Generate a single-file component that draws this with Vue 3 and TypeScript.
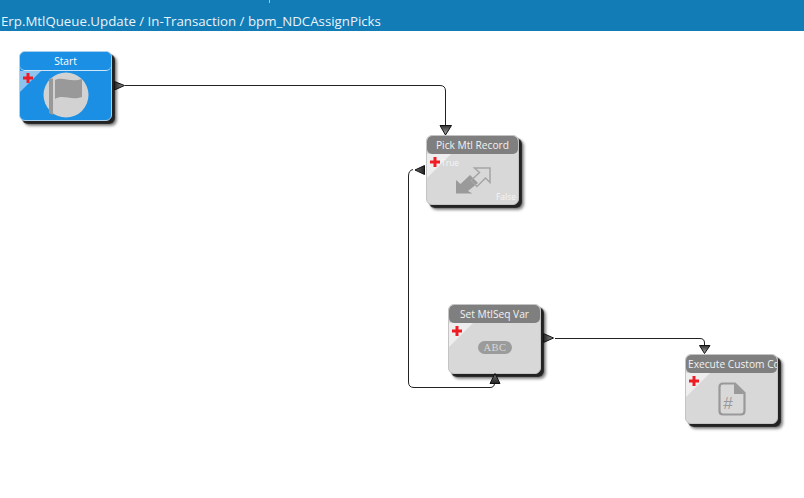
<script setup lang="ts">
interface FlowNode {
  id: string
  title: string
  x: number
  y: number
  kind: 'start' | 'cond' | 'set' | 'code'
}
const nodes: FlowNode[] = [
  { id: 'start', title: 'Start', x: 19, y: 51, kind: 'start' },
  { id: 'pick', title: 'Pick Mtl Record', x: 426, y: 135, kind: 'cond' },
  { id: 'set', title: 'Set MtlSeq Var', x: 448, y: 304, kind: 'set' },
  { id: 'code', title: 'Execute Custom Code', x: 685, y: 354, kind: 'code' },
]
</script>

<template>
  <div class="page">
    <header class="bar">
      <span class="tick"></span>
      <span class="crumb">Erp.MtlQueue.Update / In-Transaction / bpm_NDCAssignPicks</span>
    </header>
    <main class="canvas">
      <section
        v-for="n in nodes"
        :key="n.id"
        class="node"
        :class="'node-' + n.kind"
        :style="{ left: n.x + 'px', top: n.y + 'px' }"
      >
        <div class="title">{{ n.title }}</div>
        <div class="body">
          <span class="corner"></span>
          <svg class="plus" width="10" height="10" viewBox="0 0 10 10">
            <path d="M3.5 0 H6.5 V3.5 H10 V6.5 H6.5 V10 H3.5 V6.5 H0 V3.5 H3.5 Z" fill="#ee1c25" />
          </svg>
          <template v-if="n.kind === 'start'">
            <svg class="icon icon-start" width="46" height="46" viewBox="0 0 46 46">
              <circle cx="23" cy="23" r="22.5" fill="#d2d2d2" />
              <path d="M6 6.5 H10 V43 L6 41 Z" fill="#999" />
              <path d="M12 8 C19 4 27 11 39 7 V25 C28 29 20 22 12 27 Z" fill="#999" />
            </svg>
          </template>
          <template v-else-if="n.kind === 'cond'">
            <span class="lbl lbl-true">True</span>
            <span class="lbl lbl-false">False</span>
            <svg class="icon icon-cond" width="36" height="28" viewBox="0 0 36 28">
              <path d="M1 26.5 V13 L5.5 17 L15 8 L23 16 L13 24 L17.5 26.5 Z" fill="#9a9a9a" />
              <path d="M19.5 1 H35 V15.5 L30.5 11 L22 19.5 L16 13.5 L24.5 5.5 Z" fill="none" stroke="#a5a5a5" stroke-width="1.5" />
            </svg>
          </template>
          <template v-else-if="n.kind === 'set'">
            <span class="abc">ABC</span>
          </template>
          <template v-else>
            <svg class="icon icon-code" width="28" height="34" viewBox="0 0 28 34">
              <path d="M5 1.5 H17 L26.5 11 V29 Q26.5 32.5 23 32.5 H5 Q1.5 32.5 1.5 29 V5 Q1.5 1.5 5 1.5 Z" fill="none" stroke="#999" stroke-width="2.2" />
              <path d="M16 1.5 L26.5 12 H16 Z" fill="#999" />
              <text x="10" y="27" text-anchor="middle" class="hash">#</text>
            </svg>
          </template>
        </div>
      </section>

      <svg class="wires" width="804" height="467" viewBox="0 31 804 467">
        <defs>
          <linearGradient id="gr" x1="0" y1="0" x2="1" y2="0">
            <stop offset="0" stop-color="#222" />
            <stop offset="1" stop-color="#999" />
          </linearGradient>
          <linearGradient id="gd" x1="0" y1="0" x2="0" y2="1">
            <stop offset="0" stop-color="#333" />
            <stop offset="1" stop-color="#aaa" />
          </linearGradient>
          <linearGradient id="gu" x1="0" y1="1" x2="0" y2="0">
            <stop offset="0" stop-color="#222" />
            <stop offset="1" stop-color="#777" />
          </linearGradient>
          <linearGradient id="gl" x1="1" y1="0" x2="0" y2="0">
            <stop offset="0" stop-color="#222" />
            <stop offset="1" stop-color="#666" />
          </linearGradient>
        </defs>
        <g fill="none" stroke="#222" stroke-width="1">
          <path d="M125 85.5 H440 Q445.5 85.5 445.5 91 V126" />
          <path d="M555 338.5 H700 Q704.5 338.5 704.5 343 V346" />
          <path d="M413 169.5 Q408.5 170.5 408.5 176 V382 Q408.5 387.5 414 387.5 H490 Q494.5 387.5 494.5 383 V381" />
        </g>
        <g stroke="#111" stroke-width="1">
          <path d="M114.5 81.5 L124.5 85.5 L114.5 90 Z" fill="url(#gr)" />
          <path d="M440 125.5 H451.5 L445.5 135 Z" fill="url(#gd)" />
          <path d="M543.5 333.5 L553.5 338 L543.5 342.5 Z" fill="url(#gr)" />
          <path d="M699.5 345.5 H710 L704.5 353.5 Z" fill="url(#gd)" />
          <path d="M424.5 165.5 V174.5 L415 170 Z" fill="url(#gl)" />
          <path d="M490 383.5 L495 373.5 L500 383.5 Z" fill="url(#gu)" />
        </g>
      </svg>
    </main>
  </div>
</template>

<style scoped>
.page {
  width: 804px;
  height: 498px;
  background: #fff;
  overflow: hidden;
  font-family: "Open Sans", "Noto Sans", sans-serif;
}
.bar {
  position: relative;
  height: 31px;
  background: #127cb7;
  display: flex;
  align-items: flex-end;
  box-sizing: border-box;
  padding: 0 0 0 1px;
}
.tick {
  position: absolute;
  left: 269px;
  top: 0;
  width: 1px;
  height: 3px;
  background: #9cc6de;
}
.crumb {
  color: #e9f3f9;
  font-size: 13.27px;
  line-height: 20px;
  white-space: nowrap;
}
.canvas {
  position: relative;
  height: 467px;
}
.wires {
  position: absolute;
  left: 0;
  top: 0;
  pointer-events: none;
}
.node {
  position: absolute;
  margin-top: -31px;
  width: 93px;
  height: 70px;
  border-radius: 6px;
  box-shadow: 3px 3px 1px #222, 5px 5px 3px #888;
  overflow: hidden;
  display: flex;
  flex-direction: column;
  background: #d8d8d8;
  border: 1px solid #c4c4c4;
  box-sizing: border-box;
}
.title {
  height: 18px;
  flex: none;
  background: #7f7f7f;
  color: #f2f2f2;
  font-size: 10.2px;
  line-height: 18px;
  text-align: center;
  white-space: nowrap;
  overflow: hidden;
  border-radius: 5px;
}
.node-code .title {
  text-align: left;
  padding-left: 2px;
}
.body {
  position: relative;
  flex: 1;
}
.corner {
  position: absolute;
  left: 0;
  top: 0;
  width: 0;
  height: 0;
  border-top: 24px solid #eeeeee;
  border-right: 24px solid transparent;
}
.plus {
  position: absolute;
  left: 3px;
  top: 3px;
}
.icon {
  position: absolute;
}
.node-start {
  background: #1a8fe3;
  border-color: #a9d0ee;
}
.node-start .title {
  background: #1a8fe3;
  border-bottom: 1px solid #cfe5f6;
  box-sizing: content-box;
  height: 18px;
  line-height: 19px;
  color: #fff;
}
.node-start .corner {
  border-top-width: 21px;
  border-right-width: 21px;
  border-top-color: #8cc4ef;
}
.node-start .plus {
  top: 2px;
}
.icon-start {
  left: 23px;
  top: 1px;
}
.icon-cond {
  left: 28px;
  top: 13px;
}
.icon-code {
  left: 32px;
  top: 9px;
}
.hash {
  font-family: "Liberation Sans", sans-serif;
  font-size: 17px;
  fill: #999;
}
.lbl {
  position: absolute;
  color: #f5f5f5;
  font-size: 8.5px;
  line-height: 11px;
}
.lbl-true {
  left: 14px;
  top: 3px;
}
.lbl-false {
  right: 2px;
  bottom: 2px;
}
.abc {
  position: absolute;
  left: 29px;
  top: 18px;
  width: 34px;
  height: 13px;
  border-radius: 7px;
  background: #9b9b9b;
  color: #d8d8d8;
  font-family: "Liberation Serif", serif;
  font-size: 10.5px;
  line-height: 13px;
  text-align: center;
  letter-spacing: 0.5px;
}
</style>
